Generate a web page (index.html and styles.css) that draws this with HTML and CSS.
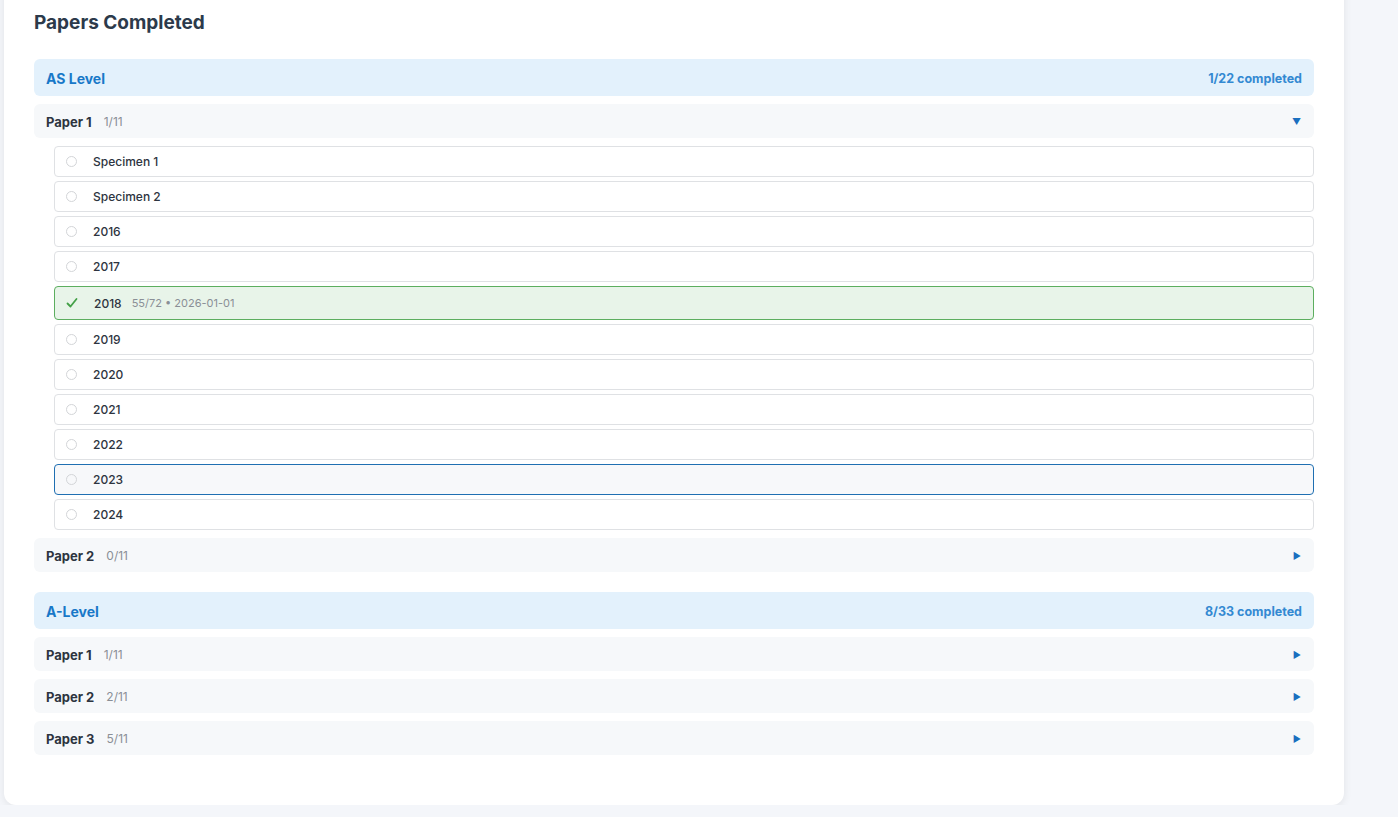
FILE: index.html
```html
<!DOCTYPE html>
<html lang="en">
<head>
    <meta charset="UTF-8">
    <meta name="viewport" content="width=device-width, initial-scale=1.0">
    <title>Papers Completed</title>
    <link rel="stylesheet" href="styles.css">
</head>
<body>
    <div class="card">
        <h2 class="card-title">Papers Completed</h2>

        <div class="level">
            <div class="level-header">
                <span class="level-name">AS Level</span>
                <span class="level-progress">1/22 completed</span>
            </div>

            <div class="paper open">
                <div class="paper-header">
                    <span class="paper-name">Paper 1</span>
                    <span class="paper-count">1/11</span>
                    <span class="toggle">&#9660;</span>
                </div>
                <ul class="paper-list">
                    <li class="item"><span class="dot"></span><span class="item-name">Specimen 1</span></li>
                    <li class="item"><span class="dot"></span><span class="item-name">Specimen 2</span></li>
                    <li class="item"><span class="dot"></span><span class="item-name">2016</span></li>
                    <li class="item"><span class="dot"></span><span class="item-name">2017</span></li>
                    <li class="item done">
                        <svg class="check" width="12" height="12" viewBox="0 0 12 12"><path d="M1.5 6.5 L4.5 9.5 L10.5 2" fill="none" stroke="#43a047" stroke-width="1.8" stroke-linecap="round" stroke-linejoin="round"/></svg>
                        <span class="item-name">2018</span>
                        <span class="item-meta">55/72 &bull; 2026-01-01</span>
                    </li>
                    <li class="item"><span class="dot"></span><span class="item-name">2019</span></li>
                    <li class="item"><span class="dot"></span><span class="item-name">2020</span></li>
                    <li class="item"><span class="dot"></span><span class="item-name">2021</span></li>
                    <li class="item"><span class="dot"></span><span class="item-name">2022</span></li>
                    <li class="item focused"><span class="dot"></span><span class="item-name">2023</span></li>
                    <li class="item"><span class="dot"></span><span class="item-name">2024</span></li>
                </ul>
            </div>

            <div class="paper">
                <div class="paper-header">
                    <span class="paper-name">Paper 2</span>
                    <span class="paper-count">0/11</span>
                    <span class="toggle">&#9654;</span>
                </div>
            </div>
        </div>

        <div class="level">
            <div class="level-header">
                <span class="level-name">A-Level</span>
                <span class="level-progress">8/33 completed</span>
            </div>
            <div class="paper">
                <div class="paper-header">
                    <span class="paper-name">Paper 1</span>
                    <span class="paper-count">1/11</span>
                    <span class="toggle">&#9654;</span>
                </div>
            </div>
            <div class="paper">
                <div class="paper-header">
                    <span class="paper-name">Paper 2</span>
                    <span class="paper-count">2/11</span>
                    <span class="toggle">&#9654;</span>
                </div>
            </div>
            <div class="paper">
                <div class="paper-header">
                    <span class="paper-name">Paper 3</span>
                    <span class="paper-count">5/11</span>
                    <span class="toggle">&#9654;</span>
                </div>
            </div>
        </div>
    </div>
</body>
</html>
```

FILE: styles.css
```css
body {
    margin: 0;
    padding: 0;
    background: #f4f6fa;
    font-family: 'Inter', 'Noto Sans', sans-serif;
    color: #2d3440;
}

.card {
    width: 1280px;
    margin: -20px 0 0 4px;
    padding: 31px 30px 50px 30px;
    background: #fff;
    border-radius: 12px;
    box-shadow: 0 2px 8px rgba(0, 0, 0, 0.08);
}

.card-title {
    margin: 0 0 24px 0;
    font-size: 19px;
    line-height: 24px;
    font-weight: 700;
    color: #2c3a4b;
}

.level {
    display: flex;
    flex-direction: column;
    gap: 8px;
    margin-bottom: 20px;
}

.level:last-child {
    margin-bottom: 0;
}

.level-header {
    display: flex;
    align-items: center;
    justify-content: space-between;
    height: 36px;
    padding: 1px 12px 0 12px;
    background: #e3f1fc;
    border-radius: 6px;
}

.level-name {
    font-size: 14px;
    font-weight: 700;
    color: #1878c8;
}

.level-progress {
    font-size: 12.5px;
    font-weight: 700;
    color: #3389d2;
}

.paper-header {
    display: flex;
    align-items: center;
    height: 33px;
    padding: 1px 13px 0 12px;
    background: #f6f8fa;
    border-radius: 6px;
}

.paper-name {
    font-size: 13px;
    font-weight: 700;
    color: #2d3440;
}

.paper-count {
    margin-left: 12px;
    font-size: 12px;
    color: #8a8f96;
}

.toggle {
    margin-left: auto;
    font-size: 9px;
    color: #1a6fbf;
}

.paper-list {
    list-style: none;
    margin: 8px 0 0 20px;
    padding: 0;
    display: flex;
    flex-direction: column;
    gap: 4px;
}

.item {
    display: flex;
    align-items: center;
    height: 29px;
    padding: 0 11px;
    border: 1px solid #dfe1e4;
    border-radius: 4px;
    background: #fff;
    font-size: 12px;
    font-weight: 500;
    color: #2d3440;
}

.dot {
    width: 9px;
    height: 9px;
    border: 1.5px solid #d3d5d8;
    border-radius: 50%;
    margin-right: 16px;
    flex-shrink: 0;
}

.check {
    margin-right: 16px;
    flex-shrink: 0;
}

.item.done {
    height: 32px;
    background: #e8f4e9;
    border-color: #5cae5f;
}

.item-meta {
    margin-left: 10px;
    font-size: 11px;
    font-weight: 400;
    color: #8a8f96;
}

.item.focused {
    background: #f7f8fa;
    border-color: #1f6fb2;
}
```
